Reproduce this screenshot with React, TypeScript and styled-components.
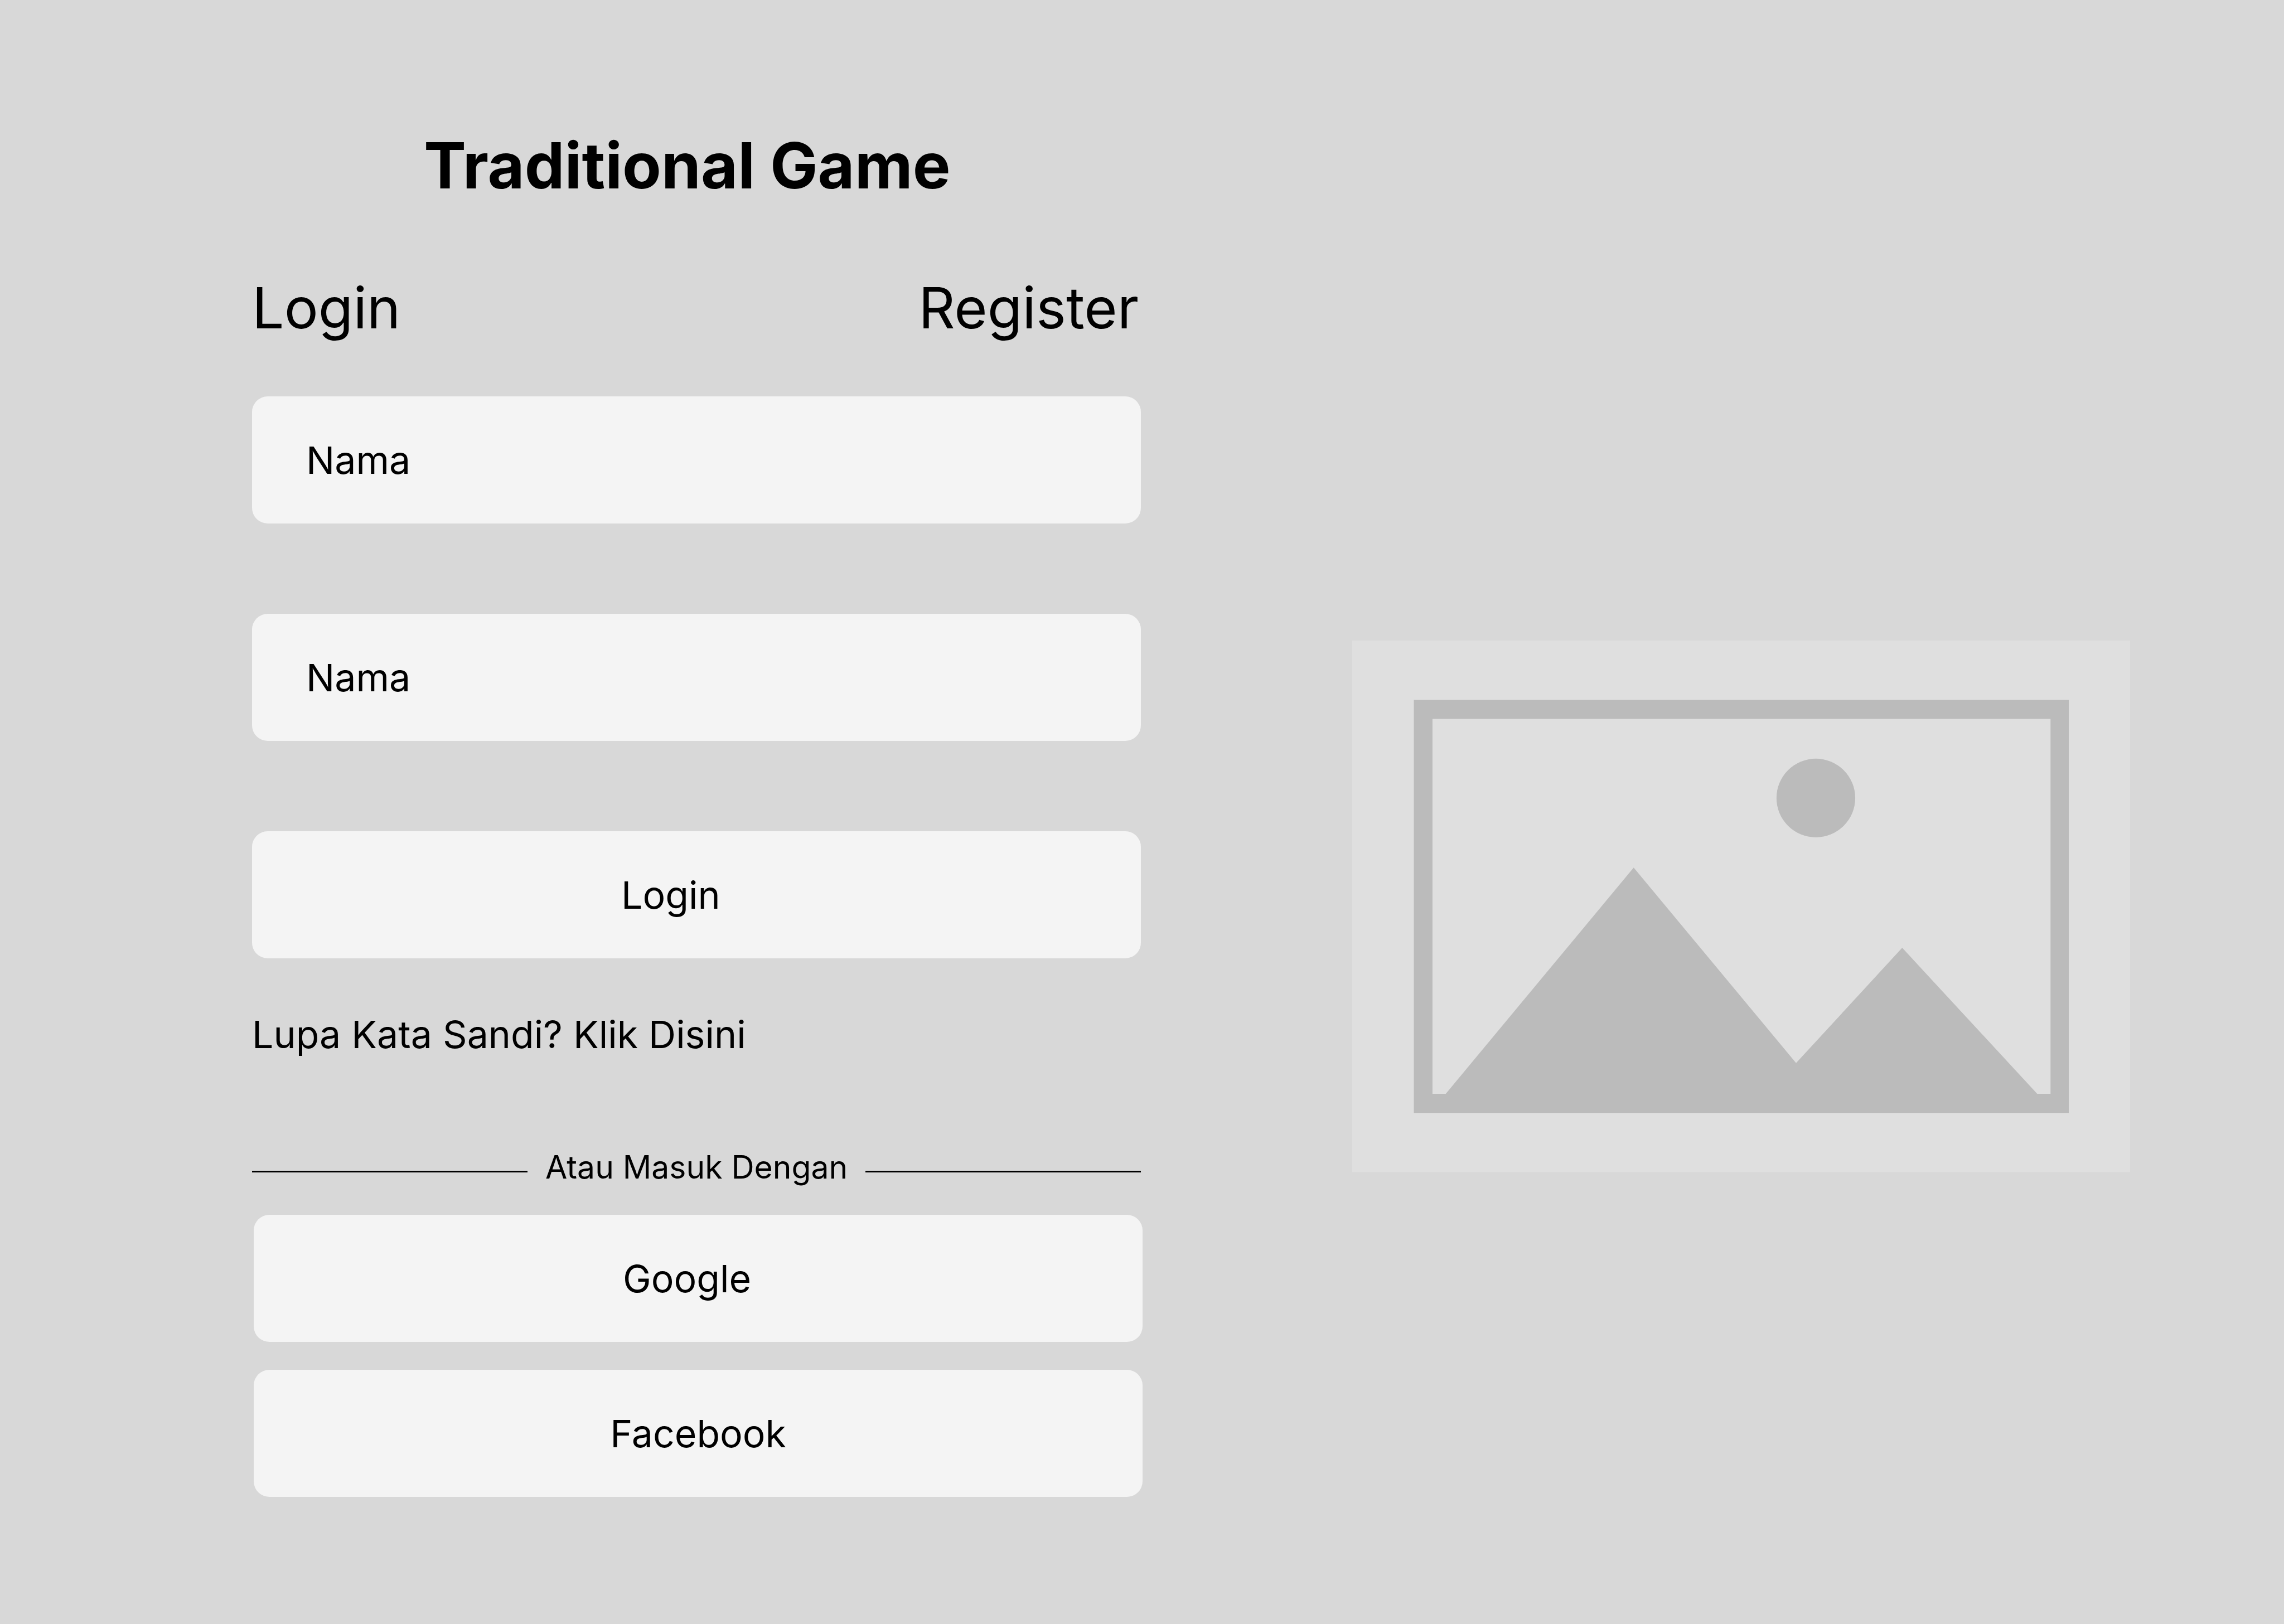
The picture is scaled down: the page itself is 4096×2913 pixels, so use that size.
import React from "react";
import styled, { createGlobalStyle } from "styled-components";

const color = {
  page: "#d8d8d8",
  surface: "#f4f4f4",
  ink: "#000000",
  pictureBack: "#dfdfdf",
  pictureShape: "#bbbbbb",
};

const GlobalStyle = createGlobalStyle`
  *, *::before, *::after { box-sizing: border-box; }
  body {
    margin: 0;
    background: ${color.page};
    color: ${color.ink};
    font-family: Inter, "Liberation Sans", sans-serif;
    font-size: 68px;
    line-height: 84px;
  }
`;

const Page = styled.main`
  display: grid;
  grid-template-columns: minmax(0, 8fr) minmax(0, 7fr);
  column-gap: 379px;
  align-items: start;
  min-height: 100vh;
  padding: 228px 276px 228px 452px;
`;

const Column = styled.section`
  display: flex;
  flex-direction: column;
`;

const Title = styled.h1`
  margin: 0;
  padding-left: 308px;
  font-size: 114px;
  line-height: 138px;
  font-weight: 700;
`;

const Tabs = styled.nav`
  display: flex;
  justify-content: space-between;
  margin: 124px 0 97px;
  padding-right: 4px;
`;

const Tab = styled.a`
  color: inherit;
  text-decoration: none;
  font-size: 102px;
  line-height: 124px;
`;

const Form = styled.form`
  display: flex;
  flex-direction: column;
  gap: 162px;
`;

const Field = styled.input`
  width: 100%;
  height: 228px;
  padding: 0 97px;
  border: 0;
  border-radius: 28px;
  background: ${color.surface};
  color: inherit;
  font: inherit;

  &::placeholder {
    color: ${color.ink};
    opacity: 1;
  }
`;

const Button = styled.button<{ $align?: "start" | "center" }>`
  width: 100%;
  height: 228px;
  padding: 0 0 0 ${(p) => (p.$align === "start" ? "662px" : "0")};
  border: 0;
  border-radius: 28px;
  background: ${color.surface};
  color: inherit;
  font: inherit;
  text-align: ${(p) => p.$align ?? "center"};
  cursor: pointer;
`;

const ForgotLink = styled.a`
  align-self: flex-start;
  margin: 94px 0 162px;
  color: inherit;
  text-decoration: none;
`;

const Divider = styled.div`
  display: flex;
  align-items: center;
  gap: 32px;
  margin-bottom: 50px;
  font-size: 57px;
  line-height: 70px;
`;

const Rule = styled.hr`
  flex: 1;
  height: 3px;
  margin: 14px 0 0;
  border: 0;
  background: ${color.ink};
`;

const Social = styled.div`
  display: flex;
  flex-direction: column;
  gap: 50px;
  margin: 0 -3px 0 3px;
`;

const Picture = styled.svg`
  display: block;
  width: 100%;
  height: auto;
  margin-top: 921px;
`;

function PicturePlaceholder() {
  return (
    <Picture viewBox="0 0 2045 1398" aria-hidden="true">
      <rect width="2045" height="1398" fill={color.pictureBack} />
      <g fill={color.pictureShape}>
        <path fillRule="evenodd" d="M162 156H1884V1242H162ZM211 206V1192H1836V206Z" />
        <circle cx="1219" cy="414" r="103.5" />
        <path d="M245 1193L740 597L1167 1111L1446 808L1802 1193Z" />
      </g>
    </Picture>
  );
}

export default function App() {
  return (
    <>
      <GlobalStyle />
      <Page>
        <Column>
          <Title>Traditional Game</Title>
          <Tabs>
            <Tab href="#login">Login</Tab>
            <Tab href="#register">Register</Tab>
          </Tabs>
          <Form onSubmit={(e) => e.preventDefault()}>
            <Field type="text" placeholder="Nama" aria-label="Nama" />
            <Field type="text" placeholder="Nama" aria-label="Nama" />
            <Button type="submit" $align="start">Login</Button>
          </Form>
          <ForgotLink href="#lupa">Lupa Kata Sandi? Klik Disini</ForgotLink>
          <Divider>
            <Rule />
            <span>Atau Masuk Dengan</span>
            <Rule />
          </Divider>
          <Social>
            <Button type="button" $align="start">Google</Button>
            <Button type="button">Facebook</Button>
          </Social>
        </Column>
        <PicturePlaceholder />
      </Page>
    </>
  );
}
